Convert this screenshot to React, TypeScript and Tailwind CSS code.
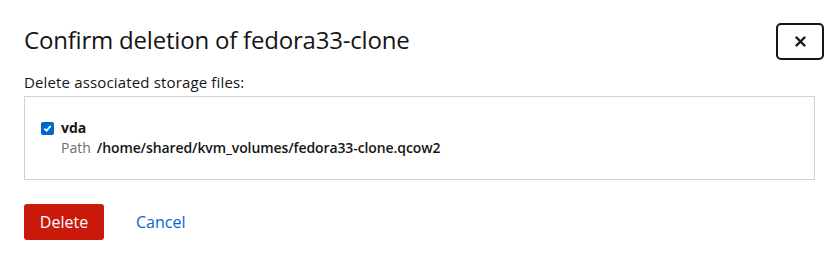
import React from "react"

const App = () => {
  return (
    <div className="h-[263px] w-[838px] bg-white font-['Open_Sans',sans-serif] text-[#151515]">
      <div className="px-6 pt-[23px]">
        <header className="flex items-start justify-between">
          <h1 className="pt-[1px] text-[24px] leading-[32px] tracking-[-0.2px]">
            Confirm deletion of fedora33-clone
          </h1>
          <button className="flex h-[37px] w-[48px] items-center justify-center rounded-[5px] border-2 border-[#151515] mr-[-10px]">
            <svg width="11" height="11" viewBox="0 0 11 11">
              <path d="M1.5 1.5 L9.5 9.5 M9.5 1.5 L1.5 9.5" stroke="#151515" strokeWidth="2.4" strokeLinecap="round" />
            </svg>
          </button>
        </header>

        <p className="mt-[12px] text-[15px] leading-[20px] tracking-[0.15px]">Delete associated storage files:</p>

        <div className="mt-[4px] h-[84px] w-[791px] border border-[#d2d2d2] px-4 pt-[21px]">
          <label className="flex items-center gap-[7px]">
            <span className="flex h-[13px] w-[13px] items-center justify-center rounded-[2px] bg-[#0066cc]">
              <svg width="9" height="9" viewBox="0 0 9 9">
                <path d="M1.3 4.6 L3.6 6.8 L7.7 1.9" stroke="white" strokeWidth="1.8" fill="none" />
              </svg>
            </span>
            <span className="text-[14px] font-bold leading-[20px]">vda</span>
          </label>
          <div className="ml-[20px] flex gap-[6px] text-[14px] leading-[20px]">
            <span className="text-[#6a6e73]">Path</span>
            <span className="font-semibold tracking-[-0.1px]">/home/shared/kvm_volumes/fedora33-clone.qcow2</span>
          </div>
        </div>

        <div className="mt-[24px] flex items-center gap-[16px]">
          <button className="h-[36px] w-[80px] rounded-[3px] bg-[#c9190b] text-[16px] text-white">
            Delete
          </button>
          <button className="px-4 text-[16px] text-[#0066cc]">Cancel</button>
        </div>
      </div>
    </div>
  )
}

export default App
